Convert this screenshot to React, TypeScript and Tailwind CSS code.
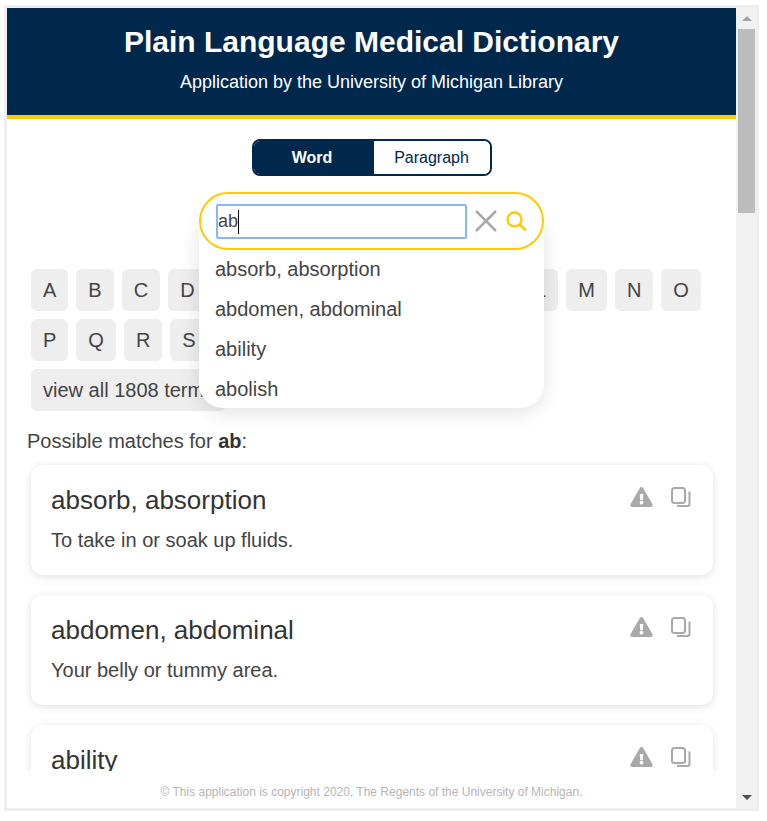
import { FaExclamationTriangle } from 'react-icons/fa';

const letters = 'ABCDEFGHIJKLMNOPQRSTUVWXYZ'.split('');

const suggestions = ['absorb, absorption', 'abdomen, abdominal', 'ability', 'abolish'];

const terms = [
  { word: 'absorb, absorption', text: 'To take in or soak up fluids.' },
  { word: 'abdomen, abdominal', text: 'Your belly or tummy area.' },
  { word: 'ability', text: '' },
];

function CopyIcon() {
  return (
    <svg width="20" height="20" viewBox="0 0 20 20" fill="none" stroke="#a9a9a9" strokeWidth="2">
      <rect x="1" y="1" width="13" height="15" rx="2.5" />
      <path d="M18.5 4.5v12.5a2 2 0 0 1-2 2H6" />
    </svg>
  );
}

function TermCard({ word, text }: { word: string; text: string }) {
  return (
    <div className="ml-6 h-[110px] w-[682px] shrink-0 rounded-xl bg-white pl-5 pr-[22px] pt-[20px] shadow-[0_2px_8px_rgba(0,0,0,0.12)]">
      <div className="flex items-start justify-between">
        <h2 className="text-[26px] leading-[30px] text-[#333]">{word}</h2>
        <div className="flex items-center gap-[18px] pt-[2px]">
          <FaExclamationTriangle className="h-5 w-[23px] text-[#a9a9a9]" />
          <CopyIcon />
        </div>
      </div>
      {text && <p className="mt-[10px] text-[20px] leading-[30px] text-[#444]">{text}</p>}
    </div>
  );
}

export default function App() {
  return (
    <div className="bg-white pl-1 pt-[5px] font-['Liberation_Sans',sans-serif]">
      <div className="flex h-[806px] w-[755px] border-3 border-[#eee]">
        <main className="flex w-[729px] flex-col bg-white">
          <div className="min-h-0 flex-1 overflow-hidden">
            {/* Header */}
            <header className="h-[111px] border-b-4 border-[#ffcb05] bg-[#00274c] pt-[15px] text-center text-white">
              <h1 className="text-[30px] font-bold leading-[38px]">Plain Language Medical Dictionary</h1>
              <p className="mt-[10px] text-[18px] leading-[22px]">Application by the University of Michigan Library</p>
            </header>

            {/* Word / Paragraph toggle */}
            <div className="mx-auto mt-5 flex h-[37px] w-[240px] overflow-hidden rounded-lg border-2 border-[#00274c] text-[16px]">
              <button className="w-[120px] bg-[#00274c] pr-[3px] font-bold text-white">Word</button>
              <button className="flex-1 bg-white text-[#00274c]">Paragraph</button>
            </div>

            {/* Search */}
            <div className="relative z-10 mx-auto mt-4 h-[58px] w-[345px]">
              <div className="absolute left-0 right-0 top-[29px] h-[187px] rounded-b-3xl bg-white pt-[28px] shadow-[0_4px_20px_rgba(0,0,0,0.12)]">
                {suggestions.map((s) => (
                  <div key={s} className="h-10 pl-4 text-[20px] leading-10 text-[#444]">
                    {s}
                  </div>
                ))}
              </div>
              <div className="relative flex h-[58px] items-center rounded-[29px] border-2 border-[#ffcb05] bg-white pl-[15px]">
                <div className="relative">
                  <input
                    readOnly
                    value="ab"
                    className="h-[35px] w-[251px] rounded-[2px] border-2 border-[#85b7fb] bg-white text-[18px] text-[#444] caret-transparent outline-none"
                  />
                  <span className="absolute left-[22px] top-[6px] h-6 w-px bg-black" />
                </div>
                <svg className="ml-2" width="22" height="22" viewBox="0 0 22 22" fill="none" stroke="#a9a9a9" strokeWidth="2.5">
                  <path d="M1 1l20 20M21 1L1 21" />
                </svg>
                <svg className="ml-[9px]" width="21" height="21" viewBox="0 0 21 21" fill="none" stroke="#ffcb05" strokeWidth="2.4">
                  <circle cx="8.5" cy="8.5" r="7" />
                  <path d="M13.5 13.5l6.5 6" />
                </svg>
              </div>
            </div>

            {/* Alphabet */}
            <div className="ml-6 mt-[19px] flex w-[680px] flex-wrap gap-x-2 gap-y-2 text-[20px] text-[#444]">
              {letters.map((l) => (
                <button key={l} className="h-[42px] rounded-md bg-[#eee] px-3">
                  {l}
                </button>
              ))}
              <button className="h-[42px] rounded-md bg-[#eee] px-3">view all 1808 terms</button>
            </div>

            <p className="ml-5 mt-[19px] text-[20px] leading-[22px] text-[#444]">
              Possible matches for <b className="text-[#333]">ab</b>:
            </p>

            {/* Results */}
            <div className="mt-[13px] flex flex-col gap-5">
              {terms.map((t) => (
                <TermCard key={t.word} word={t.word} text={t.text} />
              ))}
            </div>
          </div>

          <footer className="flex h-[37px] shrink-0 items-center justify-center pt-[5px] text-[12px] text-[#b8b4b4]">
            © This application is copyright 2020, The Regents of the University of Michigan.
          </footer>
        </main>

        {/* Scrollbar */}
        <div className="flex w-5 flex-col bg-[#f1f1f1]">
          <div className="flex h-[21px] items-center justify-center pl-[1px]">
            <div className="h-0 w-0 border-x-[5px] border-b-[5px] border-x-transparent border-b-[#a3a3a3]" />
          </div>
          <div className="ml-[2px] h-[184px] w-[17px] bg-[#bcbcbc]" />
          <div className="flex-1" />
          <div className="flex h-[21px] items-center justify-center pl-[1px]">
            <div className="h-0 w-0 border-x-[5px] border-t-[5px] border-x-transparent border-t-[#505050]" />
          </div>
        </div>
      </div>
    </div>
  );
}
